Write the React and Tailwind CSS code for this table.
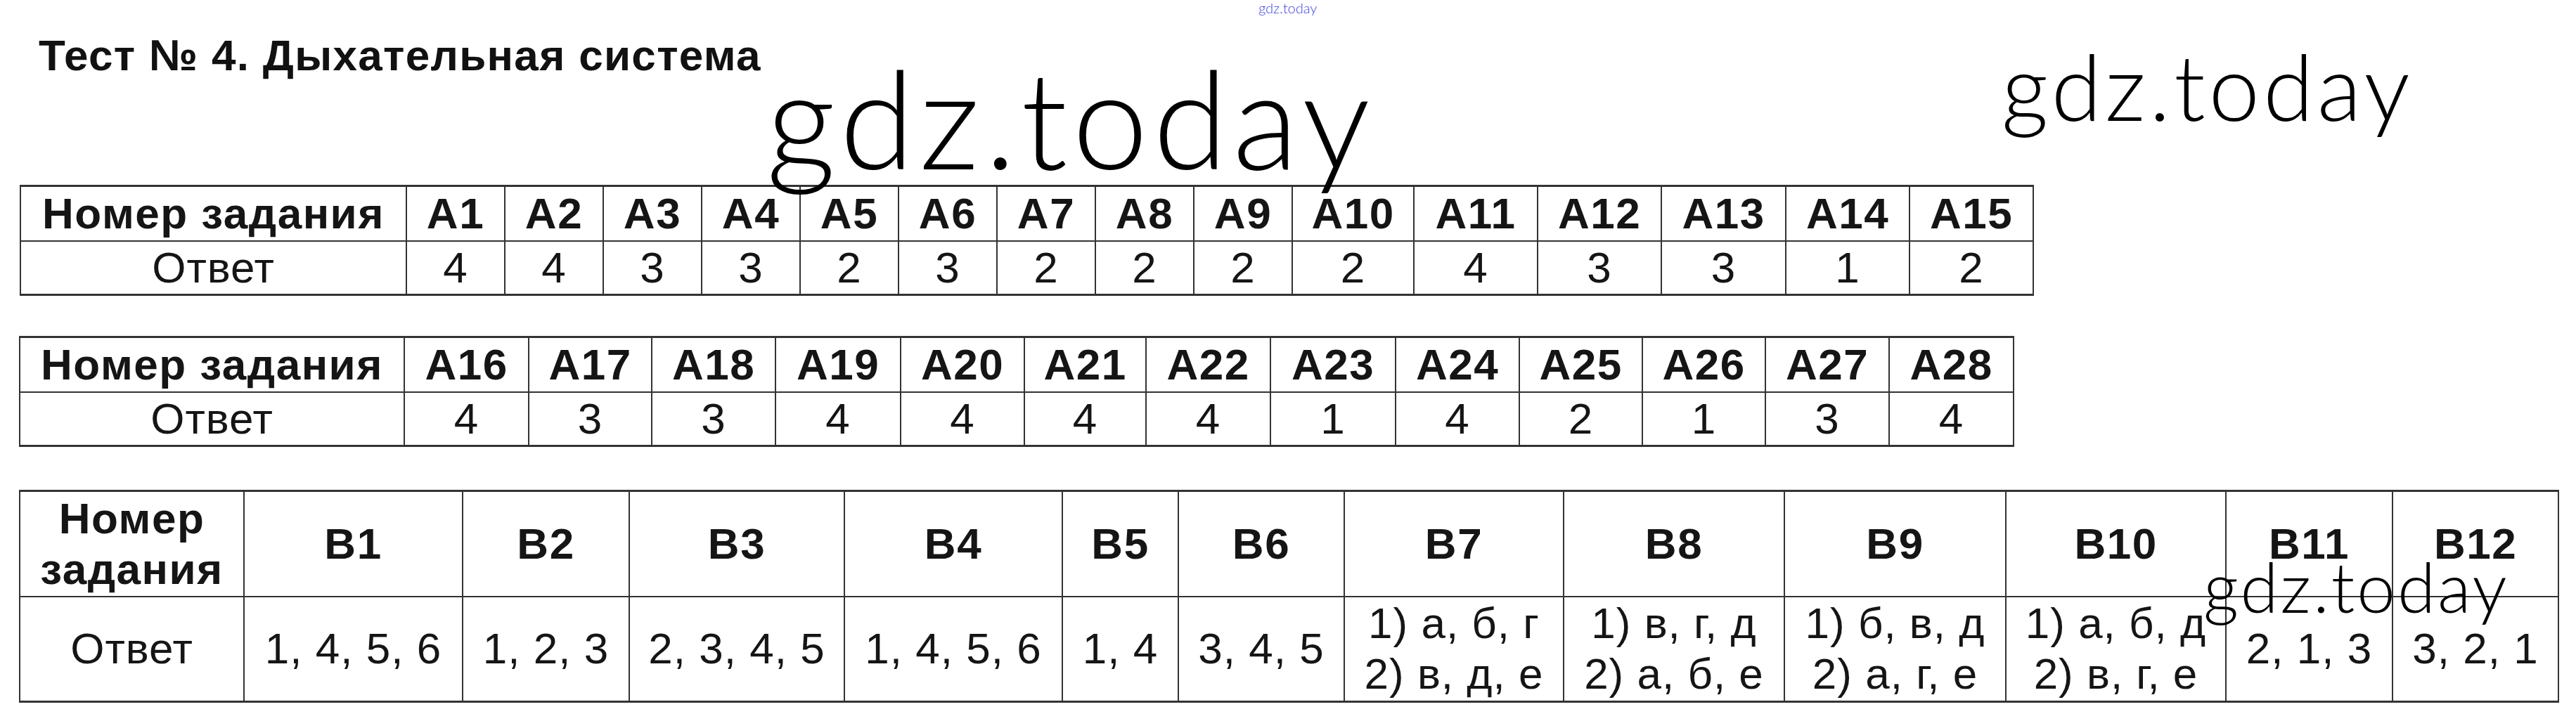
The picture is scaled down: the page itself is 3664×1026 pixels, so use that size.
import React from 'react';

const tableA1 = {
  cols: [
    'w-[549px]', 'w-[140px]', 'w-[140px]', 'w-[140px]', 'w-[140px]', 'w-[140px]', 'w-[140px]', 'w-[140px]',
    'w-[140px]', 'w-[140px]', 'w-[173px]', 'w-[176px]', 'w-[176px]', 'w-[177px]', 'w-[176px]', 'w-[176px]',
  ],
  heads: ['A1', 'A2', 'A3', 'A4', 'A5', 'A6', 'A7', 'A8', 'A9', 'A10', 'A11', 'A12', 'A13', 'A14', 'A15'],
  answers: ['4', '4', '3', '3', '2', '3', '2', '2', '2', '2', '4', '3', '3', '1', '2'],
};

const tableA2 = {
  cols: [
    'w-[547px]', 'w-[177px]', 'w-[175px]', 'w-[176px]', 'w-[178px]', 'w-[176px]', 'w-[173px]', 'w-[177px]',
    'w-[178px]', 'w-[176px]', 'w-[175px]', 'w-[175px]', 'w-[176px]', 'w-[177px]',
  ],
  heads: ['A16', 'A17', 'A18', 'A19', 'A20', 'A21', 'A22', 'A23', 'A24', 'A25', 'A26', 'A27', 'A28'],
  answers: ['4', '3', '3', '4', '4', '4', '4', '1', '4', '2', '1', '3', '4'],
};

const tableB = {
  cols: [
    'w-[319px]', 'w-[311px]', 'w-[237px]', 'w-[306px]', 'w-[310px]', 'w-[165px]', 'w-[236px]',
    'w-[312px]', 'w-[314px]', 'w-[315px]', 'w-[313px]', 'w-[237px]', 'w-[236px]',
  ],
  heads: ['B1', 'B2', 'B3', 'B4', 'B5', 'B6', 'B7', 'B8', 'B9', 'B10', 'B11', 'B12'],
  answers: [
    ['1, 4, 5, 6'],
    ['1, 2, 3'],
    ['2, 3, 4, 5'],
    ['1, 4, 5, 6'],
    ['1, 4'],
    ['3, 4, 5'],
    ['1) а, б, г', '2) в, д, е'],
    ['1) в, г, д', '2) а, б, е'],
    ['1) б, в, д', '2) а, г, е'],
    ['1) а, б, д', '2) в, г, е'],
    ['2, 1, 3'],
    ['3, 2, 1'],
  ],
};

const cell = 'border-2 border-[#333] p-0 text-center align-middle whitespace-nowrap';
const head = 'text-[62px] font-bold tracking-[1.5px]';
const answer = 'text-[62px] tracking-[1px]';

function RowTable({ data, className }) {
  return (
    <table className={`table-fixed border-x-2 border-y-[3px] border-[#333] ${className}`}>
      <colgroup>
        {data.cols.map((c, i) => (
          <col key={i} className={c} />
        ))}
      </colgroup>
      <tbody>
        <tr>
          <td className={`${cell} ${head} h-[78px] leading-[70px]`}>Номер задания</td>
          {data.heads.map((h) => (
            <td key={h} className={`${cell} ${head} h-[78px] leading-[70px]`}>{h}</td>
          ))}
        </tr>
        <tr>
          <td className={`${cell} ${answer} h-[77px] leading-[70px]`}>Ответ</td>
          {data.answers.map((a, i) => (
            <td key={i} className={`${cell} ${answer} h-[77px] leading-[70px]`}>{a}</td>
          ))}
        </tr>
      </tbody>
    </table>
  );
}

function BTable({ data, className }) {
  return (
    <table className={`table-fixed border-x-2 border-y-[3px] border-[#333] ${className}`}>
      <colgroup>
        {data.cols.map((c, i) => (
          <col key={i} className={c} />
        ))}
      </colgroup>
      <tbody>
        <tr>
          <td className={`${cell} ${head} h-[150px] leading-[72px]`}>
            Номер
            <br />
            задания
          </td>
          {data.heads.map((h) => (
            <td key={h} className={`${cell} ${head} h-[150px] leading-[70px]`}>{h}</td>
          ))}
        </tr>
        <tr>
          <td className={`${cell} ${answer} h-[150px] leading-[70px]`}>Ответ</td>
          {data.answers.map((lines, i) => (
            <td key={i} className={`${cell} ${answer} h-[150px] leading-[72px]`}>
              {lines.map((l, j) => (
                <div key={j}>{l}</div>
              ))}
            </td>
          ))}
        </tr>
      </tbody>
    </table>
  );
}

export default function App() {
  return (
    <div className="relative w-[3664px] h-[1026px] overflow-hidden bg-white text-[#151515] font-['Liberation_Sans',Arial,sans-serif]">
      <div className="flex flex-col items-start pl-[27px] pt-[44px]">
        <h1 className="ml-[28px] text-[62px] leading-[69px] font-bold tracking-[1.3px] text-[#111]">
          Тест № 4. Дыхательная система
        </h1>
        <RowTable data={tableA1} className="mt-[150px] ml-[1px]" />
        <RowTable data={tableA2} className="mt-[57px]" />
        <BTable data={tableB} className="mt-[61px]" />
      </div>

      {/* watermarks lying over the page */}
      <div className="absolute left-[1790px] top-[1px] text-[20px] leading-none font-light text-[#4848dc] font-['Lato',sans-serif]">
        gdz.today
      </div>
      <div className="absolute left-[1090px] top-[70px] text-[193px] leading-none font-light tracking-[7px] text-black font-['Lato',sans-serif]">
        gdz.today
      </div>
      <div className="absolute left-[2847px] top-[57px] text-[130px] leading-none font-light tracking-[5px] text-black font-['Lato',sans-serif]">
        gdz.today
      </div>
      <div className="absolute left-[3134px] top-[785px] text-[98px] leading-none font-light tracking-[3px] text-black font-['Lato',sans-serif]">
        gdz.today
      </div>
    </div>
  );
}
